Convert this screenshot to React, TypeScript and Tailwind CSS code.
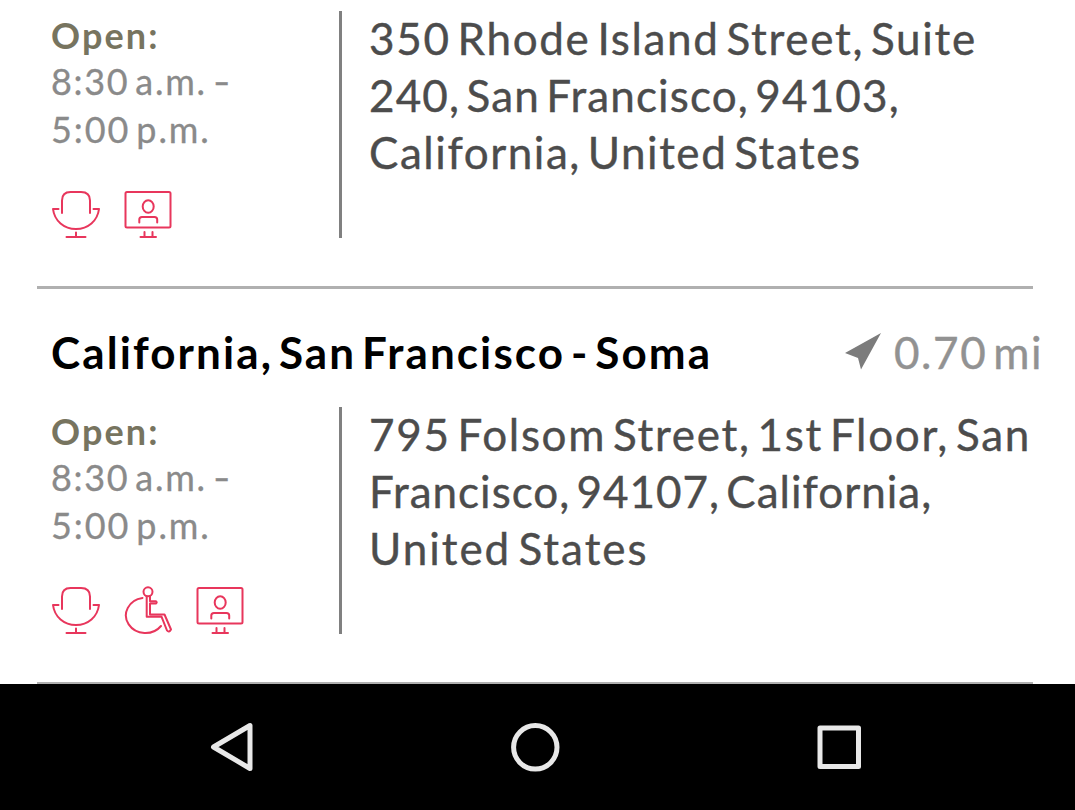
import React from "react";

type IconName = "chair" | "wheelchair" | "screen";
type Line = { text: string; tracking: string };

const iconClass = "h-[50px] w-[50px] fill-none stroke-[#e8365c] stroke-2";

function AmenityIcon({ name }: { name: IconName }) {
  if (name === "chair") {
    return (
      <svg viewBox="0 0 50 50" className={iconClass} strokeLinecap="round" strokeLinejoin="round">
        <path d="M11 23V10.500Q11 2 19.500 2H30Q39 2 39 10.500V23" />
        <path d="M7.500 19H2C3.500 31 13 39 25 39S46.500 31 48 19H42.500" />
        <path d="M25 42.500V47M15.500 47H34.500" />
      </svg>
    );
  }
  if (name === "wheelchair") {
    return (
      <svg viewBox="0 0 50 50" className={iconClass} strokeLinecap="round" strokeLinejoin="round">
        <circle cx="25" cy="5.800" r="4.500" />
        <path d="M19.500 12A19.500 17.600 0 1 0 38 40" />
        <path d="M23.700 10.500V30.700H38.500L44 44.500Q46 47 48 43.500L41.500 28.500H27V17.500H33Q34.500 16.300 33 15.200H27V10.500" />
      </svg>
    );
  }
  return (
    <svg viewBox="-0.5 0 50 50" className={iconClass} strokeLinecap="round" strokeLinejoin="round">
      <rect x="2" y="2" width="45" height="35.500" rx="1.500" />
      <ellipse cx="24.700" cy="16.500" rx="5.500" ry="6.300" />
      <path d="M15.800 32.500V29.500Q15.800 27 18.500 27H31Q33.700 27 33.700 29.500V32.500" />
      <path d="M21 42V47M29 42V47M17 47H32.500" />
    </svg>
  );
}

function LocationDetails({ lines, icons }: { lines: Line[]; icons: IconName[] }) {
  return (
    <div className="flex h-[227px] pl-[51px]">
      <div className="flex w-[288px] shrink-0 flex-col whitespace-nowrap text-[36px] leading-[48px] [word-spacing:-5px]">
        <div className="text-[#77745f] font-bold leading-[48px] tracking-[2.1px]">Open:</div>
        <div className="-mt-[2px] text-[#8a8a8a] tracking-[1.7px] [-webkit-text-stroke:0.3px]">
          8:30 a.m. <span className="inline-block origin-left scale-x-130">-</span>
        </div>
        <div className="text-[#8a8a8a] tracking-[1.9px] [-webkit-text-stroke:0.3px]">5:00 p.m.</div>
        <div className="mt-[37px] flex gap-[22px]">
          {icons.map((name) => (
            <AmenityIcon key={name} name={name} />
          ))}
        </div>
      </div>
      <div className="w-[3px] shrink-0 bg-[#808080]" />
      <address className="-mt-px pl-[27px] text-[44px] not-italic leading-[57px] whitespace-nowrap text-[#4c4c4c] [-webkit-text-stroke:0.4px] [word-spacing:-6px]">
        {lines.map((line) => (
          <div key={line.text} className={line.tracking}>{line.text}</div>
        ))}
      </address>
    </div>
  );
}

export default function App() {
  return (
    <main className="flex h-[810px] w-[1075px] flex-col overflow-hidden bg-white font-['Lato',sans-serif]">
      <div className="flex h-[684px] flex-col overflow-hidden pt-[11px]">
        <LocationDetails
          icons={["chair", "screen"]}
          lines={[
            { text: "350 Rhode Island Street, Suite", tracking: "tracking-[1.67px]" },
            { text: "240, San Francisco, 94103,", tracking: "tracking-[1.14px]" },
            { text: "California, United States", tracking: "tracking-[1.55px]" },
          ]}
        />
        <hr className="ml-[37px] mt-12 h-[3px] w-[996px] shrink-0 border-0 bg-[#b0b0b0]" />
        <header className="flex h-[118px] shrink-0 items-center whitespace-nowrap pl-[51px] pt-[7px] text-[44px]">
          <h2 className="w-[794px] pt-px font-bold text-black tracking-[2.1px] [word-spacing:-7px]">California, San Francisco - Soma</h2>
          <svg viewBox="0 0 36 37" className="h-[37px] w-[36px] fill-[#7c7c7c]">
            <path d="M36 0L16 36.500L13 25L0 20Z" />
          </svg>
          <span className="ml-[13px] text-[#929292] tracking-[1.6px] [word-spacing:-7px] [-webkit-text-stroke:0.4px]">0.70 mi</span>
        </header>
        <LocationDetails
          icons={["chair", "wheelchair", "screen"]}
          lines={[
            { text: "795 Folsom Street, 1st Floor, San", tracking: "tracking-[1.68px]" },
            { text: "Francisco, 94107, California,", tracking: "tracking-[1px]" },
            { text: "United States", tracking: "tracking-[1.98px]" },
          ]}
        />
        <hr className="ml-[37px] mt-12 h-[3px] w-[996px] shrink-0 border-0 bg-[#b0b0b0]" />
      </div>
      <nav className="flex h-[126px] items-center bg-black pl-[210px] text-[#e8e8e8]">
        <svg viewBox="0 0 44 50" className="h-[50px] w-[44px] fill-none stroke-current stroke-[5px]" strokeLinejoin="round">
          <path d="M3.500 25L40 3.500V46.500Z" />
        </svg>
        <svg viewBox="0 0 50 50" className="ml-[256px] h-[50px] w-[50px] fill-none stroke-current stroke-[5px]">
          <circle cx="25.300" cy="25.300" r="21.700" />
        </svg>
        <svg viewBox="0 0 44 44" className="ml-[257px] h-[44px] w-[44px] fill-none stroke-current stroke-[5px]" strokeLinejoin="round">
          <rect x="3" y="3" width="38.500" height="38.500" />
        </svg>
      </nav>
    </main>
  );
}
